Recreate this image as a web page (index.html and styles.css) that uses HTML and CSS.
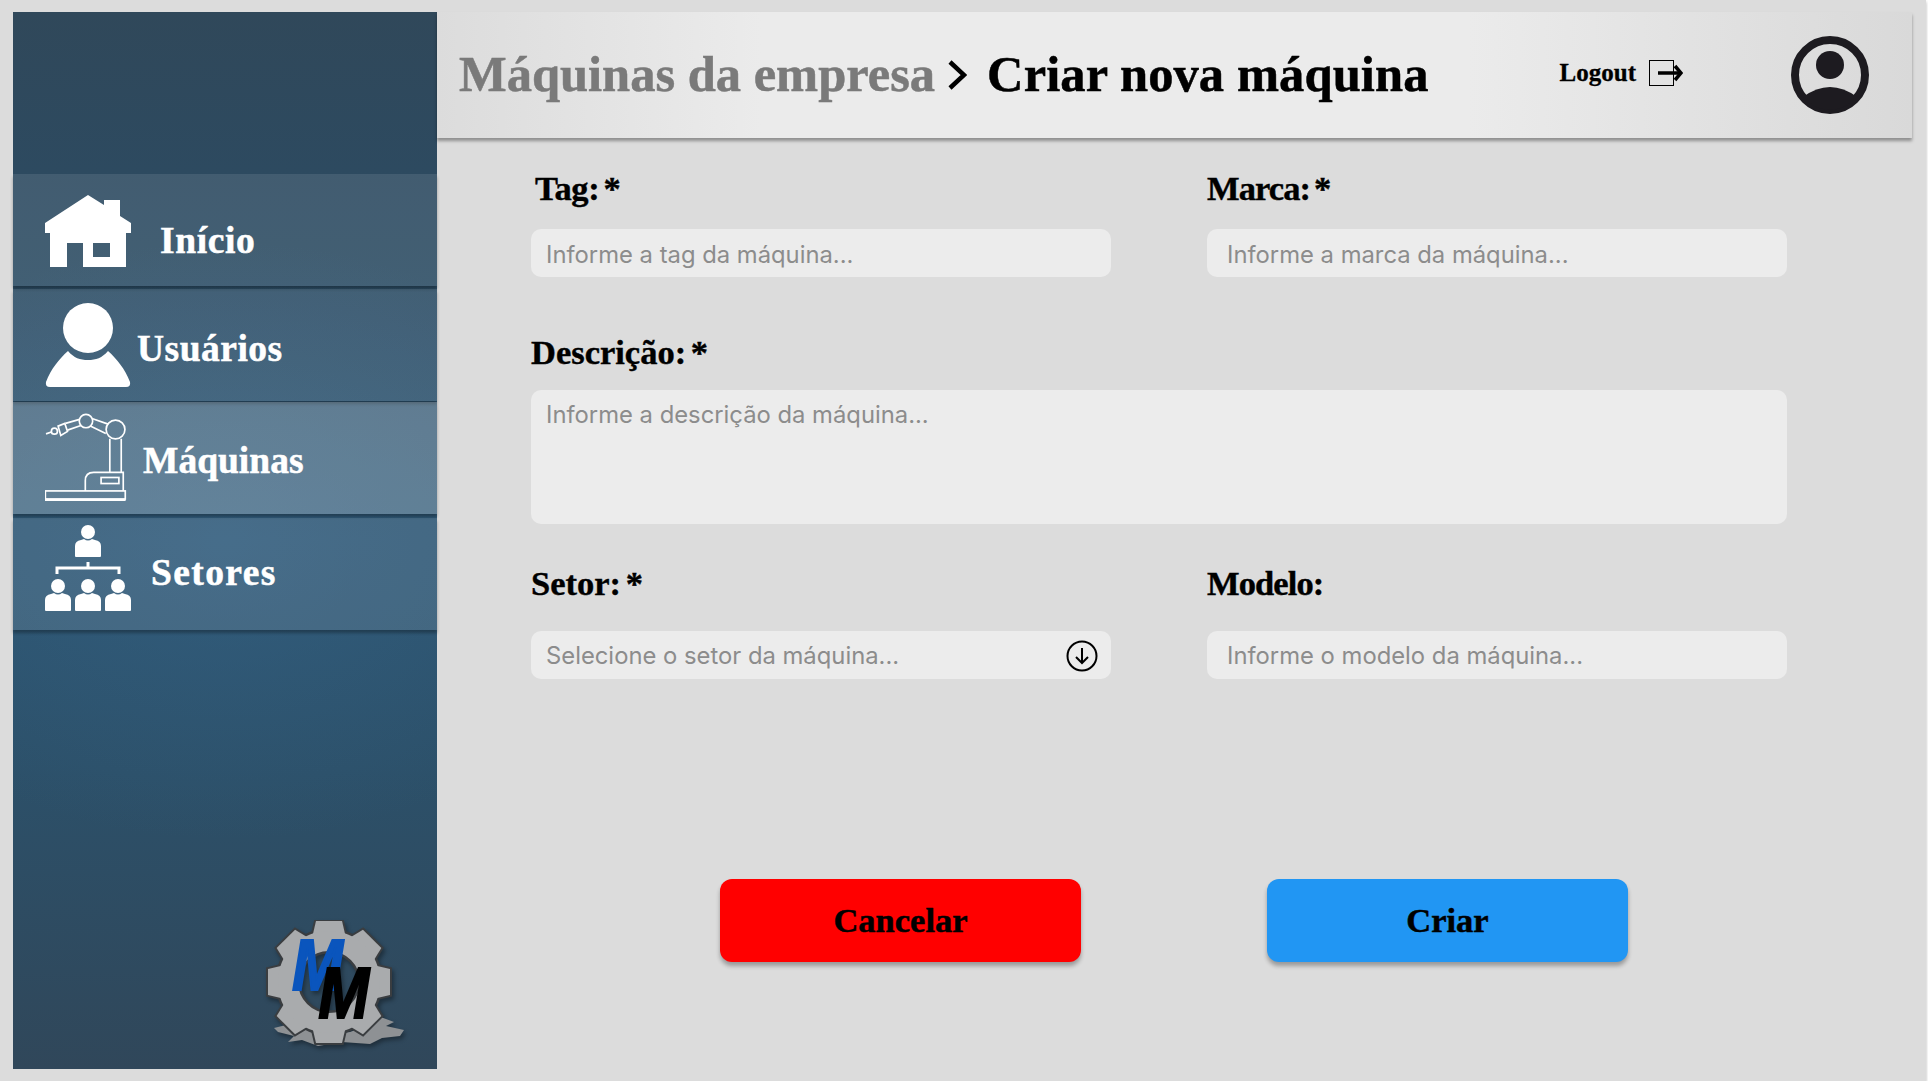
FILE: index.html
```html
<!DOCTYPE html>
<html lang="pt-BR">
<head>
  <meta charset="UTF-8">
  <meta name="viewport" content="width=device-width, initial-scale=1.0">
  <title>Criar nova máquina</title>
  <link rel="stylesheet" href="styles.css">
</head>
<body>
  <div class="frame">
    <div class="app">

      <aside class="sidebar">
        <nav class="nav">
          <a class="nav-item" href="#">
            <svg class="nav-icon icon-home" viewBox="0 0 86 72">
              <path fill="#fff" fill-rule="evenodd" d="M43 0 L59 10 V5 H75 V21 L86 28 V38 H81 V72 H38 V48 H22 V72 H5 V38 H0 V28 Z M48 48 V62 H65 V48 Z"/>
            </svg>
            <span class="nav-label label-inicio">Início</span>
          </a>
          <a class="nav-item" href="#">
            <svg class="nav-icon" viewBox="0 0 86 84">
              <circle cx="43" cy="25" r="25" fill="#fff"/>
              <path fill="#fff" d="M1 79 C6 66 14 56 23 48 C29 55 35 57 43 57 C51 57 57 55 63 48 C72 56 80 66 85 79 Q86 84 81 84 L5 84 Q0 84 1 79 Z"/>
            </svg>
            <span class="nav-label label-usuarios">Usuários</span>
          </a>
          <a class="nav-item active" href="#">
            <svg class="nav-icon icon-robot" viewBox="45 20 240 265" preserveAspectRatio="xMinYMid meet">
              <g fill="none" stroke="#fff" stroke-width="5">
                <rect x="46" y="255" width="238" height="24"/>
                <path d="M165 255 V225 Q165 200 190 200 H278 V255"/>
                <rect x="212" y="215" width="53" height="18"/>
                <path d="M238 100 V200 M272 100 V200"/>
                <circle cx="255" cy="72" r="28"/>
                <circle cx="167" cy="47" r="20"/>
                <path d="M187 40 L233 56 M180 62 L226 84"/>
                <path d="M148 42 L106 54 M152 60 L112 74"/>
                <path d="M84 62 L104 54 L112 78 L92 90 Z"/>
                <circle cx="73" cy="77" r="9"/>
                <path d="M48 85 L66 79"/>
              </g>
              <path d="M45 282 H285" stroke="#fff" stroke-width="7"/>
            </svg>
            <span class="nav-label label-maquinas">Máquinas</span>
          </a>
          <a class="nav-item" href="#">
            <svg class="nav-icon icon-org" viewBox="45 524 86 86">
              <defs>
                <path id="person" fill="#fff" d="M-13 17 V7 Q-13 2 -7 1 L-4 0 Q0 3 4 0 L7 1 Q13 2 13 7 V17 Q13 18 12 18 H-12 Q-13 18 -13 17 Z"/>
              </defs>
              <g fill="#fff">
                <circle cx="88" cy="531" r="7"/>
                <circle cx="58" cy="585" r="7"/>
                <circle cx="88" cy="585" r="7"/>
                <circle cx="118" cy="585" r="7"/>
              </g>
              <use href="#person" x="88" y="538"/>
              <use href="#person" x="58" y="592"/>
              <use href="#person" x="88" y="592"/>
              <use href="#person" x="118" y="592"/>
              <path fill="none" stroke="#fff" stroke-width="3" d="M57 573 V567 H119 V573 M88 561 V567"/>
            </svg>
            <span class="nav-label label-setores">Setores</span>
          </a>
        </nav>

        <svg class="logo" viewBox="0 0 150 130">
          <defs>
            <g id="gear-teeth">
              <path id="tooth" d="M58 1 H84 L88 18 H54 Z"/>
              <use href="#tooth" transform="rotate(45 71 62)"/>
              <use href="#tooth" transform="rotate(90 71 62)"/>
              <use href="#tooth" transform="rotate(135 71 62)"/>
              <use href="#tooth" transform="rotate(180 71 62)"/>
              <use href="#tooth" transform="rotate(225 71 62)"/>
              <use href="#tooth" transform="rotate(270 71 62)"/>
              <use href="#tooth" transform="rotate(315 71 62)"/>
            </g>
          </defs>
          <path fill="#8e9194" d="M16 108 L32 104 L50 108 L60 116 L92 112 L108 106 L120 96 L136 102 L128 106 L146 110 L142 116 L124 118 L112 124 L84 122 L60 126 L44 120 L30 122 L36 116 L20 112 Z"/>
          <use href="#gear-teeth" fill="#3a3d40" stroke="#3a3d40" stroke-width="4"/>
          <circle cx="71" cy="62" r="41" fill="none" stroke="#3a3d40" stroke-width="25"/>
          <use href="#gear-teeth" fill="#a9abad"/>
          <circle cx="71" cy="62" r="41" fill="none" stroke="#a9abad" stroke-width="20"/>
          <text class="logo-m" transform="scale(0.85 1)"><tspan x="40" y="70" fill="#0a55bd" stroke="#0a55bd">M</tspan><tspan x="71" y="98" fill="#000" stroke="#000">M</tspan></text>
        </svg>
      </aside>

      <main class="main">
        <header class="topbar">
          <h1 class="title">
            <span class="crumb">Máquinas da empresa</span>
            <svg class="crumb-sep" viewBox="0 0 20 30">
              <path d="M3 2 L17 15 L3 28" fill="none" stroke="#000" stroke-width="4.5"/>
            </svg>
            <span class="crumb-current">Criar nova máquina</span>
          </h1>
          <a class="logout" href="#">
            Logout
            <svg class="logout-icon" viewBox="0 0 34 26">
              <rect x="0.5" y="0.5" width="24" height="25" fill="none" stroke="#000"/>
              <path d="M9 13 H31" stroke="#000" stroke-width="3.5"/>
              <path d="M26 6 L32 13 L26 20" fill="none" stroke="#000" stroke-width="3.5"/>
            </svg>
          </a>
          <svg class="avatar" viewBox="0 0 78 78">
            <circle cx="39" cy="39" r="35" fill="none" stroke="#1d1b20" stroke-width="8"/>
            <circle cx="39" cy="29" r="14" fill="#1d1b20"/>
            <path fill="#1d1b20" d="M12 61 Q39 41 66 61 A35 35 0 0 1 12 61 Z"/>
          </svg>
        </header>

        <form class="form">
          <div class="row row-first">
            <div class="field">
              <label class="field-label label-tag" for="tag">Tag: *</label>
              <input class="input" id="tag" type="text" placeholder="Informe a tag da máquina...">
            </div>
            <div class="field">
              <label class="field-label label-tight" for="marca">Marca: *</label>
              <input class="input input-right" id="marca" type="text" placeholder="Informe a marca da máquina...">
            </div>
          </div>

          <div class="row row-second">
            <div class="field field-full">
              <label class="field-label" for="descricao">Descrição: *</label>
              <textarea class="input textarea" id="descricao" placeholder="Informe a descrição da máquina..."></textarea>
            </div>
          </div>

          <div class="row row-third">
            <div class="field">
              <label class="field-label" for="setor">Setor: *</label>
              <div class="select-wrap">
                <input class="input" id="setor" type="text" readonly placeholder="Selecione o setor da máquina...">
                <svg class="select-icon" viewBox="0 0 32 32">
                  <circle cx="16" cy="16" r="14.5" fill="none" stroke="#000" stroke-width="2"/>
                  <path d="M16 8 V23 M10 17 L16 23 L22 17" fill="none" stroke="#000" stroke-width="2"/>
                </svg>
              </div>
            </div>
            <div class="field">
              <label class="field-label label-tight" for="modelo">Modelo:</label>
              <input class="input input-right" id="modelo" type="text" placeholder="Informe o modelo da máquina...">
            </div>
          </div>

          <div class="actions">
            <button class="btn btn-cancel" type="button">Cancelar</button>
            <button class="btn btn-create" type="submit">Criar</button>
          </div>
        </form>
      </main>

    </div>
  </div>
</body>
</html>
```

FILE: styles.css
```css
* {
  box-sizing: border-box;
}

body {
  margin: 0;
  background-color: #fff;
  font-family: "Liberation Serif", serif;
}

.frame {
  width: 1926px;
  height: 1081px;
  padding: 12px 14px 12px 13px;
  background-color: #dcdcdc;
  box-shadow: 0 2px 3px rgba(0, 0, 0, 0.3);
}

.app {
  display: flex;
  height: 100%;
}

/* Sidebar */
.sidebar {
  width: 424px;
  flex-shrink: 0;
  display: flex;
  flex-direction: column;
  padding-top: 162px;
  background:
    radial-gradient(ellipse 420px 300px at 50% 50%, rgba(60, 110, 150, 0.35), rgba(60, 110, 150, 0)),
    linear-gradient(180deg, #30485a 0%, #2d4a60 15%, #2c5470 50%, #2c5069 72%, #30475a 100%);
}

.nav {
  display: flex;
  flex-direction: column;
}

.nav-item {
  display: flex;
  align-items: center;
  height: 112px;
  margin-bottom: 3px;
  padding-left: 32px;
  color: #fff;
  text-decoration: none;
  background-color: rgba(255, 255, 255, 0.1);
  box-shadow: 0 3px 3px rgba(0, 0, 0, 0.3);
}

.nav-item.active {
  margin-top: -2px;
  margin-bottom: 4px;
  background-color: rgba(255, 255, 255, 0.24);
}

.nav-icon {
  width: 86px;
  height: 86px;
  flex-shrink: 0;
}

.icon-home {
  margin-top: 2px;
}

.icon-robot {
  height: 89px;
  margin-top: -4px;
}

.icon-org {
  margin-top: -12px;
}

.nav-label {
  font-size: 37.5px;
  font-weight: bold;
  -webkit-text-stroke: 0.5px #fff;
}

.label-inicio {
  margin: 20px 0 0 29px;
  letter-spacing: 0.6px;
}

.label-usuarios {
  margin: 6px 0 0 6px;
  letter-spacing: 0.5px;
}

.label-maquinas {
  margin: 4px 0 0 12px;
}

.label-setores {
  margin: -4px 0 0 20px;
  letter-spacing: 1.4px;
}

.logo {
  width: 150px;
  height: 130px;
  margin-top: auto;
  margin-bottom: 19px;
  margin-left: 245px;
  filter: drop-shadow(2px 3px 2px rgba(0, 0, 0, 0.35));
}

.logo-m {
  font-family: "Liberation Sans", sans-serif;
  font-size: 72px;
  font-weight: bold;
  font-style: italic;
  stroke-width: 2px;
}

/* Header */
.main {
  flex: 1;
  min-width: 0;
}

.topbar {
  display: flex;
  align-items: center;
  height: 126px;
  padding: 0 43px 0 22px;
  background: linear-gradient(90deg, #dcdcdc 0%, #ebebeb 22%, #ebebeb 70%, #d9d9d9 100%);
  box-shadow: 0 3px 3px rgba(0, 0, 0, 0.35);
}

.title {
  display: flex;
  align-items: center;
  margin: 0;
  padding-bottom: 3px;
  font-size: 50.5px;
  font-weight: bold;
  color: #000;
  -webkit-text-stroke: 0.5px #000;
}

.crumb {
  color: #7a7a7a;
  -webkit-text-stroke: 0.5px #7a7a7a;
}

.crumb-current {
  letter-spacing: 0.1px;
}

.crumb-sep {
  width: 20px;
  height: 30px;
  margin: 3px 20px 0 12px;
}

.logout {
  display: flex;
  align-items: center;
  gap: 13px;
  margin-left: auto;
  padding-bottom: 4px;
  font-size: 25px;
  font-weight: bold;
  color: #000;
  text-decoration: none;
  -webkit-text-stroke: 0.3px #000;
}

.logout-icon {
  width: 34px;
  height: 26px;
}

.avatar {
  width: 78px;
  height: 78px;
  margin-left: 108px;
}

/* Form */
.form {
  padding: 30px 125px 0 94px;
}

.row {
  display: flex;
  gap: 96px;
}

.field {
  display: flex;
  flex-direction: column;
  width: 580px;
}

.field-full {
  width: 100%;
}

.field-label {
  height: 40px;
  font-size: 34.5px;
  line-height: 40px;
  font-weight: bold;
  word-spacing: -4px;
  color: #000;
  -webkit-text-stroke: 0.4px #000;
}

.label-tag {
  padding-left: 4px;
  letter-spacing: -0.4px;
}

.label-tight {
  letter-spacing: -0.9px;
}

.row-first {
  margin-bottom: 55px;
}

.row-first .field-label {
  margin-bottom: 21px;
}

.row-first .input {
  padding-top: 2px;
}

.row-second {
  margin-bottom: 39px;
}

.row-second .field-label {
  margin-bottom: 18px;
}

.row-third .field-label {
  margin-bottom: 28px;
}

.input {
  display: block;
  width: 100%;
  height: 48px;
  padding: 0 15px;
  border: none;
  border-radius: 10px;
  outline: none;
  background-color: #ececec;
  font-family: Inter, sans-serif;
  font-size: 23.8px;
  color: #000;
}

.input::placeholder {
  color: #8c8c8c;
  opacity: 1;
}

.input-right {
  padding-left: 20px;
}

.textarea {
  height: 134px;
  padding-top: 10px;
  resize: none;
}

.select-wrap {
  position: relative;
}

.select-icon {
  position: absolute;
  top: 9px;
  right: 13px;
  width: 32px;
  height: 32px;
}

.actions {
  display: flex;
  gap: 186px;
  margin-top: 200px;
  padding-left: 189px;
}

.btn {
  width: 361px;
  height: 83px;
  border: none;
  border-radius: 12px;
  font-family: "Liberation Serif", serif;
  font-size: 34.5px;
  font-weight: bold;
  color: #000;
  -webkit-text-stroke: 0.5px #000;
  box-shadow: 0 4px 4px rgba(0, 0, 0, 0.3);
}

.btn-cancel {
  background-color: #f00;
}

.btn-create {
  background-color: #2196f3;
}
```
